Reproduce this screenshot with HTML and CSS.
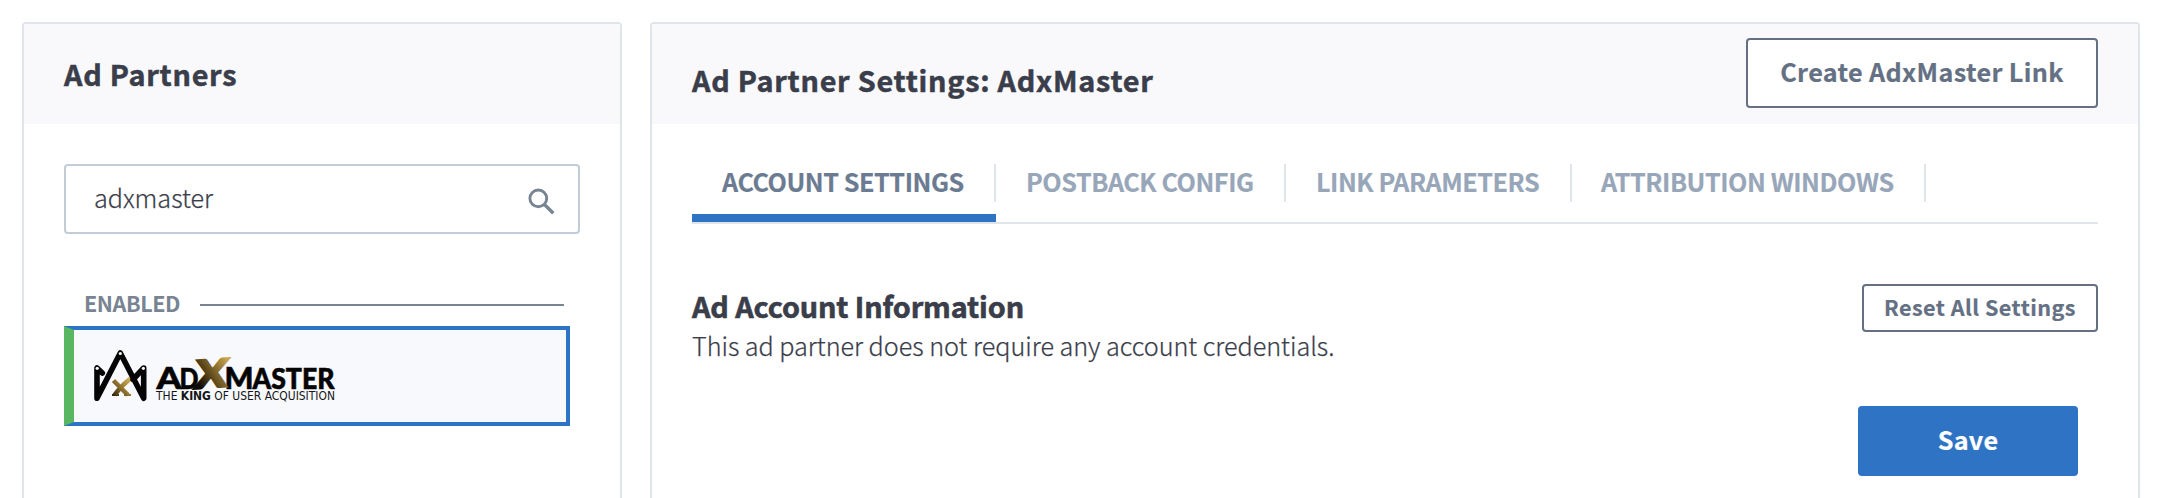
FILE: index.html
```html
<!DOCTYPE html>
<html lang="en">
<head>
<meta charset="utf-8">
<title>Ad Partners</title>
<link rel="stylesheet" href="styles.css">
</head>
<body>
<main class="layout">
  <aside class="panel partners">
    <header class="panel-header"><h1 class="panel-title">Ad Partners</h1></header>
    <div class="partners-body">
      <div class="search">
        <span class="search-value">adxmaster</span>
        <svg class="search-icon" width="28" height="28" viewBox="0 0 28 28" fill="none" stroke="#788492">
          <circle cx="10.3" cy="10.4" r="8.4" stroke-width="2.9"/>
          <path d="M16.2 16.3 25.3 25.2" stroke-width="3.4"/>
        </svg>
      </div>
      <div class="group"><span class="group-label">ENABLED</span><span class="group-line"></span></div>
      <div class="partner-card">
        <svg class="logo" width="250" height="60" viewBox="90 348 250 60">
          <defs>
            <linearGradient id="gold" x1="0" y1="1" x2="1" y2="0">
              <stop offset="0.2" stop-color="#0d0903"/><stop offset="0.5" stop-color="#6a5320"/><stop offset="0.85" stop-color="#c9a64c"/>
            </linearGradient>
            <linearGradient id="goldSmall" gradientUnits="userSpaceOnUse" x1="112" y1="396" x2="131" y2="378">
              <stop offset="0" stop-color="#2a1e08"/><stop offset="0.5" stop-color="#94762f"/><stop offset="1" stop-color="#d8b960"/>
            </linearGradient>
          </defs>
          <g fill="none" stroke="url(#goldSmall)" stroke-width="4.5">
            <path d="M113.5 380.5 128 395M130.5 378.5Q121 386 114.5 395"/>
            <path d="M112 395H119M124 395H131" stroke-width="2"/>
          </g>
          <g fill="none" stroke="#050505" stroke-width="5.6" stroke-linecap="round" stroke-linejoin="round">
            <path d="M102.3 373 97 368V398.2L120.3 353 143.7 398.2V368L133 379.5"/>
          </g>
          <g fill="#f8f9fd">
            <circle cx="120.3" cy="353.5" r="1.6"/><circle cx="97.2" cy="368.3" r="1.6"/><circle cx="143.4" cy="368.3" r="1.6"/>
          </g>
          <g class="logo-word">
            <text x="156.5" y="388.7" font-size="31" textLength="25" lengthAdjust="spacingAndGlyphs">A</text>
            <text x="179.5" y="388.7" font-size="29" textLength="19" lengthAdjust="spacingAndGlyphs">D</text>
            <text x="224.5" y="388.7" font-size="31" textLength="29" lengthAdjust="spacingAndGlyphs">M</text>
            <text x="252.5" y="388.7" font-size="29" textLength="82" lengthAdjust="spacingAndGlyphs">ASTER</text>
            <text class="logo-x" x="-16" y="0" font-size="39" textLength="32" lengthAdjust="spacingAndGlyphs" transform="translate(210 387.6) skewX(-6) skewY(-4)">X</text>
          </g>
          <text class="logo-tag" x="156" y="400.3" textLength="179" lengthAdjust="spacingAndGlyphs">THE <tspan font-weight="700">KING</tspan> OF USER ACQUISITION</text>
        </svg>
      </div>
    </div>
  </aside>

  <section class="panel settings">
    <header class="panel-header settings-header">
      <h2 class="panel-title">Ad Partner Settings: AdxMaster</h2>
      <button class="btn btn-create">Create AdxMaster Link</button>
    </header>
    <div class="settings-body">
      <nav class="tabs">
        <a class="tab tab-account active">ACCOUNT SETTINGS</a>
        <a class="tab tab-postback">POSTBACK CONFIG</a>
        <a class="tab tab-link">LINK PARAMETERS</a>
        <a class="tab tab-attribution">ATTRIBUTION WINDOWS</a>
      </nav>
      <div class="account">
        <div class="account-info">
          <h3 class="account-title">Ad Account Information</h3>
          <p class="account-text">This ad partner does not require any account credentials.</p>
        </div>
        <button class="btn btn-reset">Reset All Settings</button>
      </div>
      <div class="actions"><button class="btn btn-save">Save</button></div>
    </div>
  </section>
</main>
</body>
</html>
```
FILE: styles.css
```css
* { box-sizing: border-box; }
body {
  margin: 0;
  height: 498px;
  overflow: hidden;
  background: #fff;
  color: #3a3d4a;
  font-family: "Noto Sans CJK SC", "Noto Sans", sans-serif;
  font-size: 25.2px;
}
h1, h2, h3, p { margin: 0; }

.layout { display: flex; gap: 28px; padding: 22px 20px 0 22px; }
.panel { height: 500px; border: 2px solid #e0e5e9; border-radius: 4px; background: #fff; }
.partners { width: 600px; }
.settings { flex: 1; }
.panel-header { display: flex; align-items: center; height: 100px; padding: 0 40px; background: #f9f9fb; }
.panel-title {
  font-size: 28.8px; line-height: 40px; font-weight: 700; letter-spacing: 0.74px; white-space: nowrap;
  -webkit-text-stroke: 0.5px currentColor;
}

.partners-body { padding: 40px 40px 0; }
.search {
  display: flex; align-items: center; justify-content: space-between;
  height: 70px; padding: 0 22px 0 28px;
  border: 2px solid #c2ccd7; border-radius: 4px;
}
.search-value { font-weight: 300; line-height: 36px; padding-bottom: 4px; -webkit-text-stroke: 0.25px currentColor; }
.search-icon { margin-top: 6px; }
.group { display: flex; align-items: center; height: 32px; margin-top: 55px; padding: 0 16px 0 20px; }
.group-label {
  width: 116px; padding-bottom: 4px;
  color: #788492; font-size: 21.6px; line-height: 32px; font-weight: 700; letter-spacing: -0.45px;
}
.group-line { flex: 1; height: 2px; background: #788492; }
.partner-card {
  width: 506px; height: 100px; margin-top: 5px; padding: 18px 0 0 16px;
  background: #f8f9fd;
  border: 4px solid #2f74c4; border-left: 10px solid #5ab761;
}
.logo { display: block; overflow: visible; }
.logo-word { font-family: Lato, sans-serif; font-weight: 900; fill: #050505; stroke: #050505; stroke-width: 0.6px; }
.logo-x { fill: url(#gold); stroke: url(#gold); stroke-width: 2.2px; }
.logo-tag { font-family: "DejaVu Sans", sans-serif; font-size: 11.6px; fill: #151515; }

.btn {
  display: block; padding: 0;
  border: 2px solid #647083; border-radius: 4px; background: #fff; color: #647083;
  font-family: inherit; font-size: 25.2px; line-height: 36px; font-weight: 700; white-space: nowrap;
  -webkit-text-stroke: 0.2px currentColor;
}
.settings-header { justify-content: space-between; }
.settings-header .panel-title { padding-top: 11px; }
.btn-create { width: 352px; height: 70px; margin-bottom: 2px; padding-bottom: 4px; letter-spacing: 0.35px; }

.settings-body { padding: 40px 40px 0; }
.tabs { display: flex; height: 60px; border-bottom: 2px solid #e0e5e9; }
.tab {
  height: 38px; padding-left: 30px; border-right: 2px solid #e0e5e9;
  color: #98a6b9; line-height: 34px; font-weight: 700; letter-spacing: -0.46px; white-space: nowrap;
  -webkit-text-stroke: 0.2px currentColor;
}
.tab-account { width: 304px; }
.tab-postback { width: 290px; }
.tab-link { width: 286px; }
.tab-attribution { width: 354px; padding-left: 29px; }
.tab.active { color: #6b7b92; }
.tab.active::after { content: ""; display: block; width: 304px; height: 8px; margin: 16px 0 0 -30px; background: #2f74c4; }

.account { display: flex; justify-content: space-between; height: 78px; margin-top: 60px; }
.account-info { padding-top: 1px; }
.account-title { font-size: 28.8px; line-height: 42px; font-weight: 700; letter-spacing: -0.12px; -webkit-text-stroke: 0.6px currentColor; }
.account-text { font-weight: 300; line-height: 36px; letter-spacing: -0.03px; -webkit-text-stroke: 0.25px currentColor; }
.btn-reset { width: 236px; height: 48px; padding-bottom: 3px; font-size: 21.6px; line-height: 32px; letter-spacing: 0.46px; }
.actions { display: flex; justify-content: flex-end; padding: 44px 20px 0 0; }
.btn-save { width: 220px; height: 70px; padding-bottom: 4px; border: 0; background: #2f74c4; color: #fff; letter-spacing: 0.3px; }
```
